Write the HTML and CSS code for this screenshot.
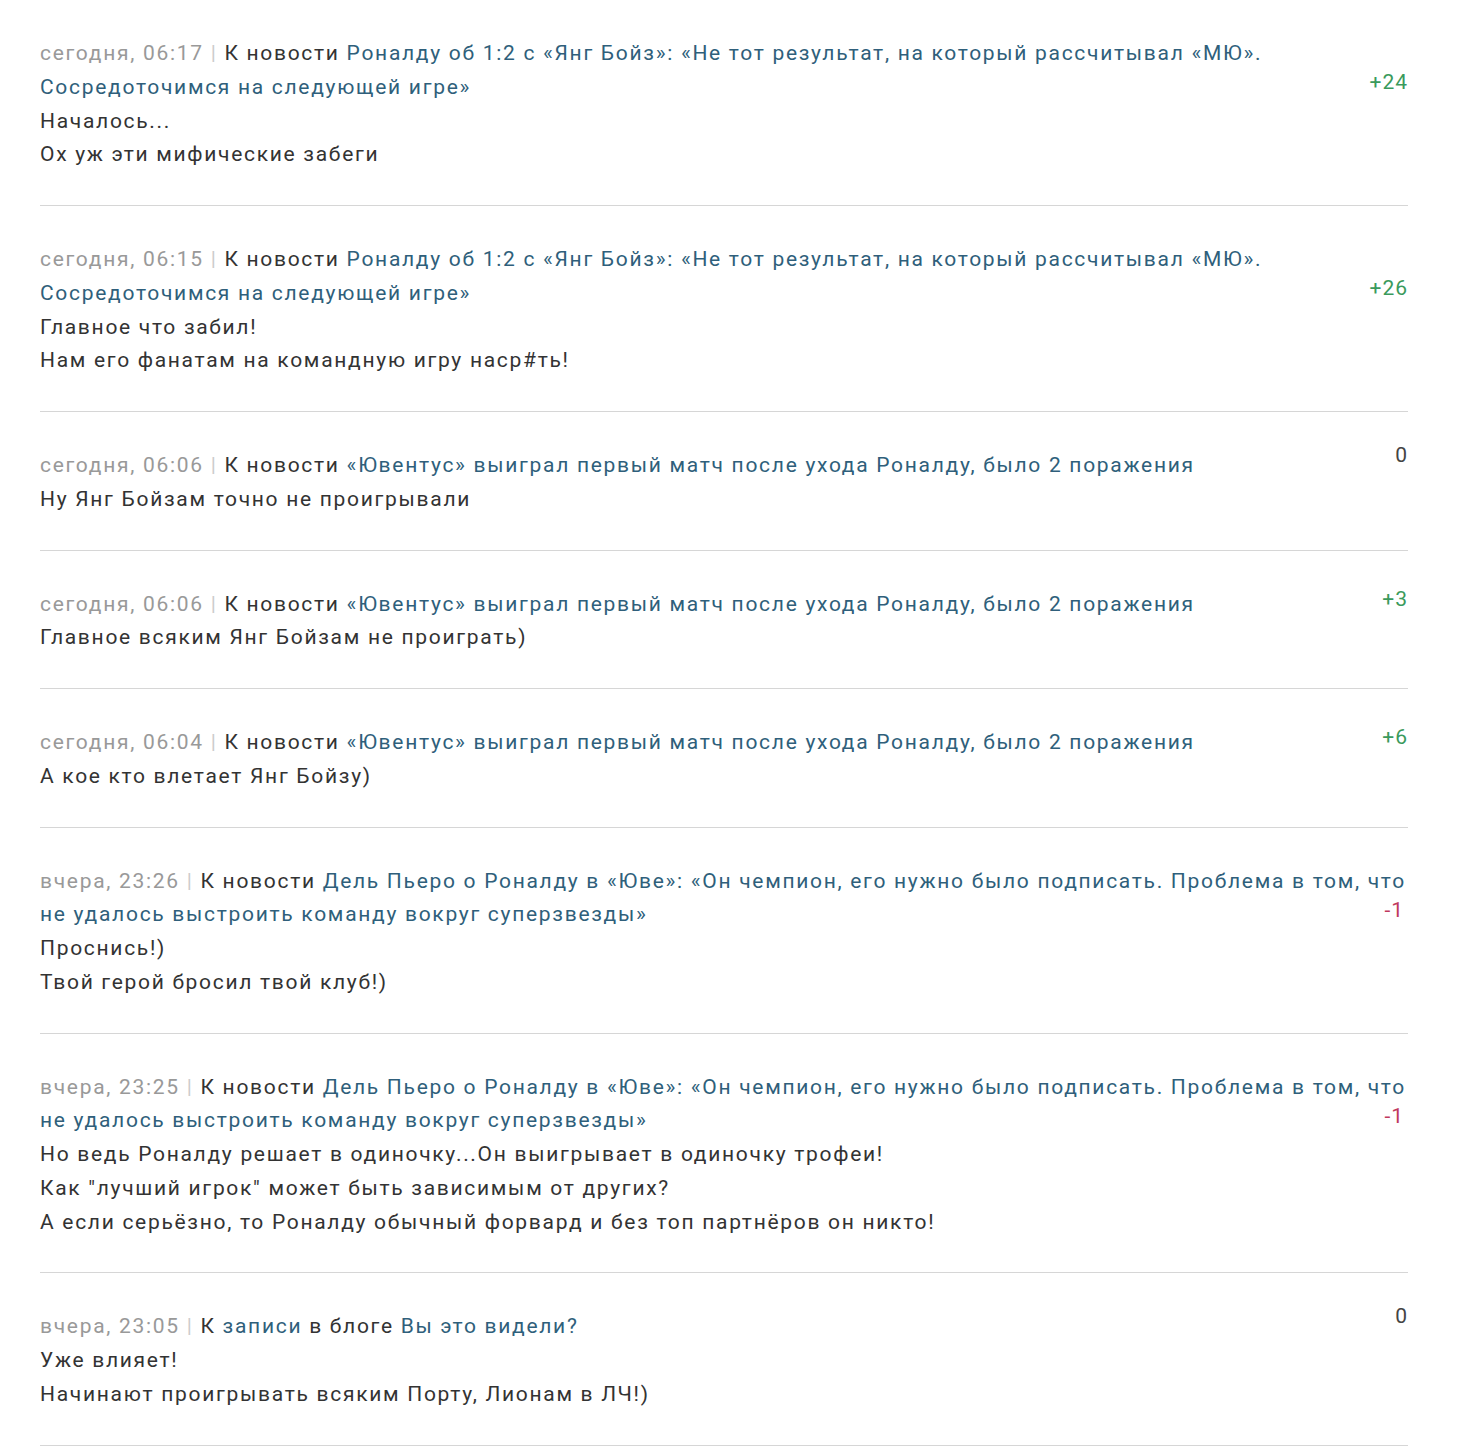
FILE: index.html
```html
<!DOCTYPE html>
<html lang="ru">
<head>
    <meta charset="UTF-8">
    <title>Комментарии</title>
    <link rel="stylesheet" href="styles.css">
</head>
<body>
    <div class="comments">
        <div class="comment long-title">
            <div class="comment-body">
                <div class="comment-meta">
                    <span class="date">сегодня, 06:17</span> <span class="sep">|</span> К новости <a href="#">Роналду об 1:2 с «Янг Бойз»: «Не тот результат, на который рассчитывал «МЮ». Сосредоточимся на следующей игре»</a>
                </div>
                <div class="comment-text">Началось...<br>Ох уж эти мифические забеги</div>
            </div>
            <div class="rating plus">+24</div>
        </div>

        <div class="comment long-title">
            <div class="comment-body">
                <div class="comment-meta">
                    <span class="date">сегодня, 06:15</span> <span class="sep">|</span> К новости <a href="#">Роналду об 1:2 с «Янг Бойз»: «Не тот результат, на который рассчитывал «МЮ». Сосредоточимся на следующей игре»</a>
                </div>
                <div class="comment-text">Главное что забил!<br>Нам его фанатам на командную игру наср#ть!</div>
            </div>
            <div class="rating plus">+26</div>
        </div>

        <div class="comment">
            <div class="comment-body">
                <div class="comment-meta">
                    <span class="date">сегодня, 06:06</span> <span class="sep">|</span> К новости <a href="#">«Ювентус» выиграл первый матч после ухода Роналду, было 2 поражения</a>
                </div>
                <div class="comment-text">Ну Янг Бойзам точно не проигрывали</div>
            </div>
            <div class="rating zero">0</div>
        </div>

        <div class="comment">
            <div class="comment-body">
                <div class="comment-meta">
                    <span class="date">сегодня, 06:06</span> <span class="sep">|</span> К новости <a href="#">«Ювентус» выиграл первый матч после ухода Роналду, было 2 поражения</a>
                </div>
                <div class="comment-text">Главное всяким Янг Бойзам не проиграть)</div>
            </div>
            <div class="rating plus">+3</div>
        </div>

        <div class="comment">
            <div class="comment-body">
                <div class="comment-meta">
                    <span class="date">сегодня, 06:04</span> <span class="sep">|</span> К новости <a href="#">«Ювентус» выиграл первый матч после ухода Роналду, было 2 поражения</a>
                </div>
                <div class="comment-text">А кое кто влетает Янг Бойзу)</div>
            </div>
            <div class="rating plus">+6</div>
        </div>

        <div class="comment long-title">
            <div class="comment-body">
                <div class="comment-meta">
                    <span class="date">вчера, 23:26</span> <span class="sep">|</span> К новости <a href="#">Дель Пьеро о Роналду в «Юве»: «Он чемпион, его нужно было подписать. Проблема в том, что не удалось выстроить команду вокруг суперзвезды»</a>
                </div>
                <div class="comment-text">Проснись!)<br>Твой герой бросил твой клуб!)</div>
            </div>
            <div class="rating minus">-1</div>
        </div>

        <div class="comment long-title">
            <div class="comment-body">
                <div class="comment-meta">
                    <span class="date">вчера, 23:25</span> <span class="sep">|</span> К новости <a href="#">Дель Пьеро о Роналду в «Юве»: «Он чемпион, его нужно было подписать. Проблема в том, что не удалось выстроить команду вокруг суперзвезды»</a>
                </div>
                <div class="comment-text">Но ведь Роналду решает в одиночку...Он выигрывает в одиночку трофеи!<br>Как "лучший игрок" может быть зависимым от других?<br>А если серьёзно, то Роналду обычный форвард и без топ партнёров он никто!</div>
            </div>
            <div class="rating minus">-1</div>
        </div>

        <div class="comment">
            <div class="comment-body">
                <div class="comment-meta">
                    <span class="date">вчера, 23:05</span> <span class="sep">|</span> К <a href="#">записи</a> в блоге <a href="#">Вы это видели?</a>
                </div>
                <div class="comment-text">Уже влияет!<br>Начинают проигрывать всяким Порту, Лионам в ЛЧ!)</div>
            </div>
            <div class="rating zero">0</div>
        </div>
    </div>
</body>
</html>
```

FILE: styles.css
```css
body {
    margin: 0;
    padding: 0;
    background: #fff;
    font-family: Roboto, "Noto Sans", sans-serif;
    font-size: 21px;
    letter-spacing: 1.7px;
    line-height: 33.75px;
    color: #333;
}
.comments {
    width: 1368px;
    margin-left: 40px;
}
.comment {
    display: grid;
    grid-template-columns: 1fr auto;
    padding: 37px 0 33px;
    border-bottom: 1px solid #d6d6d6;
}
.comment-body {
    grid-column: 1 / 3;
    grid-row: 1;
}
.comment-meta .date {
    color: #999;
}
.comment-meta .sep {
    color: #ccc;
}
.comment-meta a {
    color: #2f5f7b;
    text-decoration: none;
}
.comment-text {
    color: #333;
}
.rating {
    grid-column: 2;
    grid-row: 1;
    align-self: start;
    justify-self: end;
    line-height: 22px;
    letter-spacing: 1px;
    margin-top: 0;
    margin-right: 0;
}
.rating.zero {
    margin-top: -5px;
    color: #444;
}
.long-title .rating {
    margin-top: 34px;
}
.plus {
    color: #3a9a5c;
}
.minus {
    color: #c0395e;
    margin-right: 4px;
}
```
